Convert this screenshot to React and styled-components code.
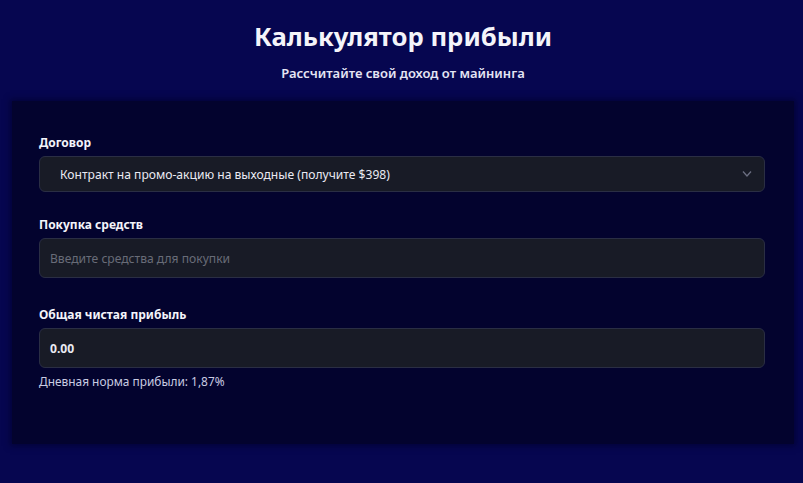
import React from "react";
import styled, { createGlobalStyle } from "styled-components";

const Global = createGlobalStyle`
  html, body { margin: 0; padding: 0; }
  body {
    background: #060650;
    font-family: "Noto Sans", "Open Sans", sans-serif;
    color: #f2f2f8;
  }
  * { box-sizing: border-box; }
`;

const Page = styled.div`
  min-height: 483px;
  padding: 20px 9px 0 12px;
`;

const Header = styled.header`
  display: flex;
  flex-direction: column;
  align-items: center;
`;

const Title = styled.h1`
  margin: 0;
  font-size: 25.7px;
  line-height: 34px;
  font-weight: 700;
  color: #f4f4fa;
`;

const Subtitle = styled.p`
  margin: 10px 0 0;
  font-size: 13px;
  line-height: 18px;
  font-weight: 600;
  color: #e4e4f4;
`;

const Card = styled.section`
  margin-top: 19px;
  height: 343px;
  background: #03032e;
  box-shadow: 0 0 6px 2px rgba(2, 2, 40, 0.6);
  padding: 33px 29px 0 27px;
  display: flex;
  flex-direction: column;
`;

const Field = styled.div`
  display: flex;
  flex-direction: column;
  margin-top: ${(p) => p.$top || 0}px;
`;

const Label = styled.label`
  font-size: 12px;
  line-height: 18px;
  font-weight: 700;
  color: #f4f4fa;
  margin-bottom: 4px;
`;

const Box = styled.div`
  position: relative;
  height: ${(p) => p.$h}px;
  background: #181b26;
  border: 1px solid #2a2e44;
  border-radius: 6px;
  display: flex;
  align-items: center;
  padding-left: ${(p) => p.$pl}px;
  font-size: 12.1px;
  color: ${(p) => (p.$muted ? "#686c78" : "#eaeaf2")};
  font-weight: ${(p) => (p.$bold ? 700 : 400)};
`;

const Chevron = styled.svg`
  position: absolute;
  right: 12px;
  top: 50%;
  transform: translateY(-50%);
`;

const Hint = styled.div`
  margin-top: 4px;
  font-size: 11.9px;
  line-height: 18px;
  color: #c9cce2;
`;

export default function App() {
  return (
    <>
      <Global />
      <Page>
        <Header>
          <Title>Калькулятор прибыли</Title>
          <Subtitle>Рассчитайте свой доход от майнинга</Subtitle>
        </Header>
        <Card>
          <Field>
            <Label>Договор</Label>
            <Box $h={36} $pl={20}>
              Контракт на промо-акцию на выходные (получите $398)
              <Chevron width="10" height="7" viewBox="0 0 10 7">
                <path d="M1 1l4 4.5L9 1" fill="none" stroke="#6a6e80" strokeWidth="1.3" />
              </Chevron>
            </Box>
          </Field>
          <Field $top={24}>
            <Label>Покупка средств</Label>
            <Box $h={40} $pl={10} $muted>
              Введите средства для покупки
            </Box>
          </Field>
          <Field $top={28}>
            <Label>Общая чистая прибыль</Label>
            <Box $h={40} $pl={10} $bold>
              0.00
            </Box>
            <Hint>Дневная норма прибыли: 1,87%</Hint>
          </Field>
        </Card>
      </Page>
    </>
  );
}
